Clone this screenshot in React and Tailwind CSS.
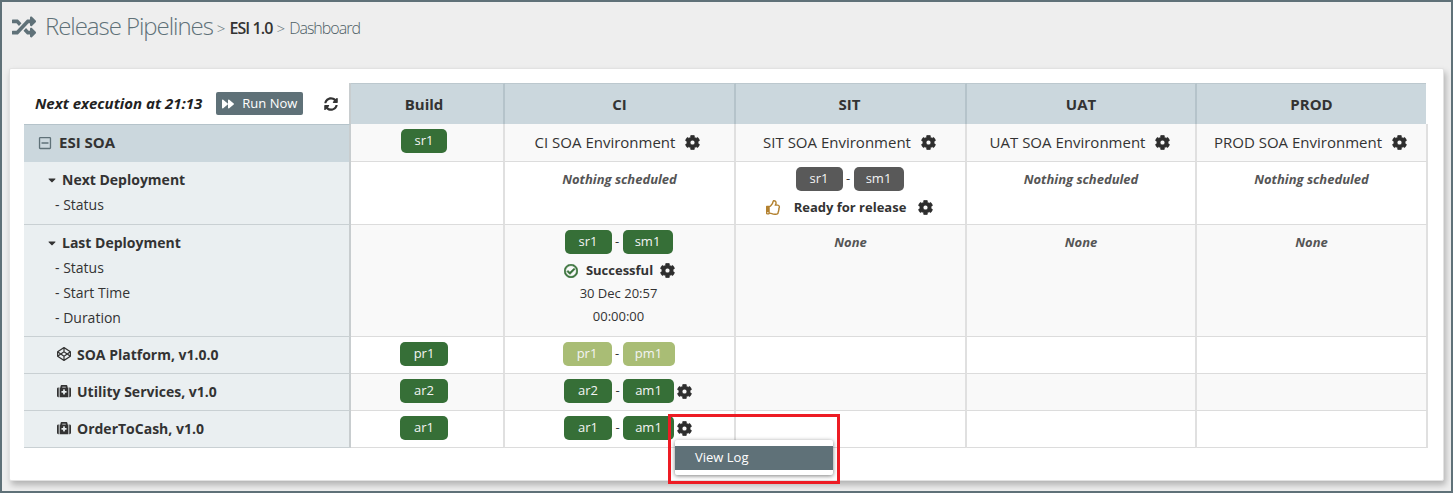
import {
  FaRandom,
  FaForward,
  FaSyncAlt,
  FaCog,
  FaRegThumbsUp,
  FaRegCheckCircle,
  FaCaretDown,
  FaRegMinusSquare,
  FaCodepen,
  FaMedkit,
} from "react-icons/fa";

const rowGrid = "grid grid-cols-[327px_154px_231px_231px_230px_231px]";

function Badge({ children, tone = "green", w = "w-[46px]" }) {
  const bg = tone === "green" ? "bg-[#366f37]" : tone === "grey" ? "bg-[#595959]" : "bg-[#a9bd75]";
  return (
    <span className={`${bg} ${w} inline-flex h-6 items-center justify-center rounded-[5px] text-[13px] text-[#f4f4f4]`}>
      {children}
    </span>
  );
}

function Pair({ a, b, tone, aw, bw }) {
  return (
    <span className="inline-flex items-center">
      <Badge tone={tone} w={aw}>{a}</Badge>
      <span className="w-[11px] text-center text-[13px] text-[#333]">-</span>
      <Badge tone={tone} w={bw}>{b}</Badge>
    </span>
  );
}

function Cog({ className = "" }) {
  return <FaCog className={`inline-block text-[15px] text-[#2e2e2e] [stroke-width:20px] ${className}`} />;
}

function Left({ children, className = "" }) {
  return (
    <div className={`border-b border-r-2 border-b-[#c9d0d3] border-r-[#c8cdcf] bg-[#eaeff1] ${className}`}>
      {children}
    </div>
  );
}

function Cell({ children, alt, className = "" }) {
  return (
    <div className={`border-b border-r-2 border-b-[#dcdcdc] border-r-[#e0e0e0] text-center ${alt ? "bg-[#f9f9f9]" : "bg-white"} ${className}`}>
      {children}
    </div>
  );
}

function Muted({ children }) {
  return <div className="pt-[5px] text-[13px] font-bold italic leading-[25px] text-[#555]">{children}</div>;
}

function Head({ children, last, className = "" }) {
  return (
    <div className={`flex h-[41px] items-center justify-center border-t border-t-[#bcc8ce] bg-[#cbd7dd] text-[15px] font-bold text-[#333] ${last ? "mr-[2px]" : "border-r-2 border-r-[#b5c3ca]"} ${className}`}>
      {children}
    </div>
  );
}

function Env({ name, className = "pr-[2px]" }) {
  return (
    <Cell alt className={`flex h-[38px] items-center justify-center gap-[10px] text-[15px] text-[#333] ${className}`}>
      {name}
      <Cog />
    </Cell>
  );
}

function Component({ icon, name }) {
  return (
    <Left className="flex h-[37px] items-center pb-[2px] pl-[33px] text-[14px] font-bold text-[#333]">
      <span className="flex w-[20px] text-[14px]">{icon}</span>
      {name}
    </Left>
  );
}

export default function App() {
  return (
    <div className="h-[493px] w-[1453px] overflow-hidden border-2 border-[#5f7178] bg-[#eeeeee] font-['Open_Sans',sans-serif] text-[#333]">
      {/* Breadcrumb */}
      <div className="flex h-[66px] items-start pl-[10px] pt-[7px] text-[#333]">
        <FaRandom className="mt-[6px] text-[24px] text-[#5f7178]" />
        <span className="ml-[9px] text-[24px] font-light leading-[34px] tracking-[-1.05px] text-[#5f7178]">Release Pipelines</span>
        <span className="ml-[4px] mt-[8px] text-[15px] font-light text-[#5f7178]">&gt;</span>
        <span className="ml-[4px] mt-[7px] text-[16px] font-semibold tracking-[-0.9px] text-[#333]">ESI 1.0</span>
        <span className="ml-[4px] mt-[8px] text-[15px] font-light text-[#5f7178]">&gt;</span>
        <span className="ml-[4px] mt-[7px] text-[16px] font-light tracking-[-1px] text-[#4f5f66]">Dashboard</span>
      </div>

      {/* Panel */}
      <div className="mx-[7px] h-[413px] rounded-[2px] border border-[#e2e2e2] bg-white pl-[14px] pt-[14px] shadow-[2px_4px_6px_rgba(0,0,0,0.25)]">
        <div className={rowGrid}>
          <div className="flex items-center border-r-2 border-r-[#c8cdcf] pl-[11px]">
            <span className="text-[15px] font-bold italic text-[#222]">Next execution at 21:13</span>
            <span className="ml-[14px] flex h-[23px] w-[87px] items-center justify-center gap-[8px] rounded-[2px] bg-[#5f7178] text-[13px] text-white">
              <FaForward className="text-[12px]" />
              Run Now
            </span>
            <FaSyncAlt className="ml-[21px] text-[14px] text-[#333]" />
          </div>
          <Head className="pr-[6px]">Build</Head>
          <Head>CI</Head>
          <Head className="pr-[2px]">SIT</Head>
          <Head>UAT</Head>
          <Head last>PROD</Head>
        </div>

        <div className={rowGrid}>
          <div className="flex h-[38px] items-center gap-[7px] border-r-2 border-t border-r-[#c8cdcf] border-t-[#b5c3ca] bg-[#cbd7dd] pb-[2px] pl-[14px] text-[15px] font-bold text-[#333]">
            <FaRegMinusSquare className="text-[14px] text-[#5f7178]" />
            ESI SOA
          </div>
          <Cell alt className="flex h-[38px] items-center justify-center pb-[4px] pr-[6px]"><Badge>sr1</Badge></Cell>
          <Env name="CI SOA Environment" className="pr-[4px]" />
          <Env name="SIT SOA Environment" />
          <Env name="UAT SOA Environment" />
          <Env name="PROD SOA Environment" />
        </div>

        <div className={rowGrid}>
          <Left className="h-[63px] pt-[5px] text-[14px] leading-[25px]">
            <div className="flex items-center pl-[22px] font-bold">
              <FaCaretDown className="mr-[4px] text-[12px]" />
              Next Deployment
            </div>
            <div className="pl-[31px]">- Status</div>
          </Left>
          <Cell className="h-[63px]" />
          <Cell className="h-[63px]"><Muted>Nothing scheduled</Muted></Cell>
          <Cell className="flex h-[63px] flex-col items-center pr-[2px] pt-[5px]">
            <Pair a="sr1" b="sm1" tone="grey" aw="w-[47px]" bw="w-[50px]" />
            <div className="mt-[4px] flex items-center text-[13px] font-bold leading-[25px] text-[#333]">
              <FaRegThumbsUp className="text-[15px] text-[#b3812f]" />
              <span className="ml-[13px]">Ready for release</span>
              <Cog className="ml-[12px]" />
            </div>
          </Cell>
          <Cell className="h-[63px]"><Muted>Nothing scheduled</Muted></Cell>
          <Cell className="h-[63px]"><Muted>Nothing scheduled</Muted></Cell>
        </div>

        <div className={rowGrid}>
          <Left className="h-[112px] pt-[5px] text-[14px] leading-[25px]">
            <div className="flex items-center pl-[22px] font-bold">
              <FaCaretDown className="mr-[4px] text-[12px]" />
              Last Deployment
            </div>
            <div className="pl-[31px]">- Status</div>
            <div className="pl-[31px]">- Start Time</div>
            <div className="pl-[31px]">- Duration</div>
          </Left>
          <Cell alt className="h-[112px]" />
          <Cell alt className="flex h-[112px] flex-col items-center pr-[2px] pt-[5px]">
            <Pair a="sr1" b="sm1" aw="w-[47px]" bw="w-[50px]" />
            <div className="mt-[4px] flex items-center pl-[2px] text-[13px] font-bold leading-[25px]">
              <FaRegCheckCircle className="text-[14px] text-[#366f37] [stroke-width:24px]" />
              <span className="ml-[8px]">Successful</span>
              <Cog className="ml-[7px]" />
            </div>
            <div className="mt-[-1px] text-[13px] leading-[23px]">30 Dec 20:57</div>
            <div className="text-[13px] leading-[23px]">00:00:00</div>
          </Cell>
          <Cell alt className="h-[112px]"><Muted>None</Muted></Cell>
          <Cell alt className="h-[112px]"><Muted>None</Muted></Cell>
          <Cell alt className="h-[112px]"><Muted>None</Muted></Cell>
        </div>

        <div className={rowGrid}>
          <Component icon={<FaCodepen />} name="SOA Platform, v1.0.0" />
          <Cell className="flex h-[37px] items-center justify-center pb-[2px] pr-[6px]"><Badge w="w-[48px]">pr1</Badge></Cell>
          <Cell className="flex h-[37px] items-center justify-center pb-[2px] pr-[2px]"><Pair a="pr1" b="pm1" tone="light" aw="w-[49px]" bw="w-[52px]" /></Cell>
          <Cell className="h-[37px]" />
          <Cell className="h-[37px]" />
          <Cell className="h-[37px]" />
        </div>

        <div className={rowGrid}>
          <Component icon={<FaMedkit />} name="Utility Services, v1.0" />
          <Cell alt className="flex h-[37px] items-center justify-center pb-[2px] pr-[6px]"><Badge w="w-[48px]">ar2</Badge></Cell>
          <Cell alt className="flex h-[37px] items-center justify-center pb-[2px] pl-[17px]">
            <Pair a="ar2" b="am1" aw="w-[48px]" bw="w-[51px]" />
            <Cog className="ml-[3px]" />
          </Cell>
          <Cell alt className="h-[37px]" />
          <Cell alt className="h-[37px]" />
          <Cell alt className="h-[37px]" />
        </div>

        <div className={rowGrid}>
          <Component icon={<FaMedkit />} name="OrderToCash, v1.0" />
          <Cell className="flex h-[37px] items-center justify-center pb-[2px] pr-[6px]"><Badge w="w-[48px]">ar1</Badge></Cell>
          <Cell className="flex h-[37px] items-center justify-center pb-[2px] pl-[17px]">
            <Pair a="ar1" b="am1" aw="w-[48px]" bw="w-[51px]" />
            <span className="relative ml-[3px] flex">
              <Cog />
              {/* Dropdown with its red callout */}
              <div className="absolute left-[-9px] top-[-7px] z-10 h-[70px] w-[172px] border-[3px] border-[#ed1c24] pl-[4px] pt-[22px] text-left">
                <div className="mt-[1px] h-[35px] w-[158px] rounded-[2px] bg-white pt-[6px] shadow-[0_1px_4px_rgba(0,0,0,0.5)]">
                  <div className="flex h-[24px] items-center bg-[#5f7178] pl-[20px] text-[13px] text-white">View Log</div>
                </div>
              </div>
            </span>
          </Cell>
          <Cell className="h-[37px]" />
          <Cell className="h-[37px]" />
          <Cell className="h-[37px]" />
        </div>
      </div>
    </div>
  );
}
